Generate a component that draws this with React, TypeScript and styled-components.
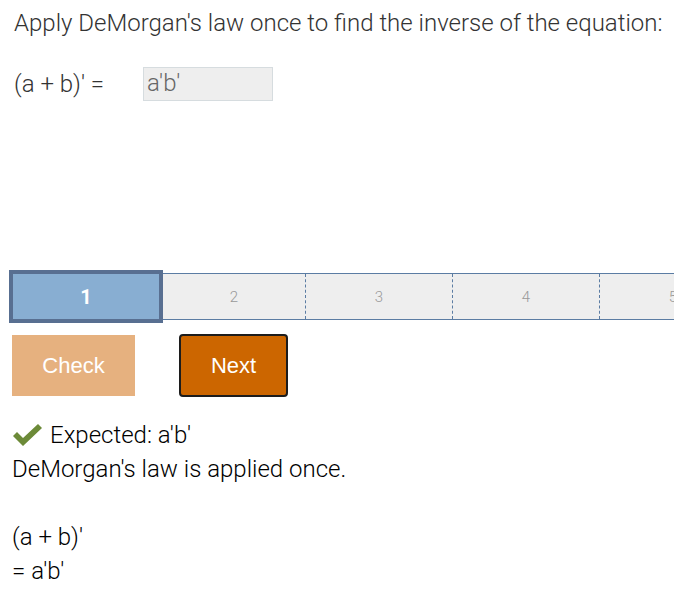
import React, { FC } from "react";
import styled, { createGlobalStyle } from "styled-components";

const GlobalStyle = createGlobalStyle`
  html, body {
    margin: 0;
    padding: 0;
    background: #fff;
    overflow: hidden;
  }
  body {
    font-family: Roboto, "Liberation Sans", sans-serif;
  }
`;

const Page = styled.div`
  width: 674px;
  height: 609px;
  overflow: hidden;
`;

const Prompt = styled.div`
  padding: 9px 0 0 14px;
  font-size: 24px;
  line-height: 28px;
  font-weight: 300;
  color: #333;
  white-space: nowrap;
`;

const EquationRow = styled.div`
  display: flex;
  align-items: center;
  margin: 30px 0 0 14px;
  font-size: 24px;
  font-weight: 300;
  color: #333;
`;

const EquationLabel = styled.span`
  width: 129px;
`;

const Answer = styled.div`
  box-sizing: border-box;
  width: 130px;
  height: 34px;
  padding: 0 0 0 3px;
  background: #eeeeee;
  border: 1px solid #d6dcdf;
  color: #666;
  font-size: 24px;
  font-weight: 300;
  line-height: 30px;
`;

const ProgressBar = styled.div`
  display: flex;
  height: 45px;
  margin: 172px 0 0 9px;
  width: 800px;
  background: #eeeeee;
  border-top: 1px solid #5b7ca3;
  border-bottom: 1px solid #5b7ca3;
`;

const Segment = styled.div<{ $active?: boolean; $w: number }>`
  box-sizing: border-box;
  flex: none;
  width: ${(p) => p.$w}px;
  display: flex;
  align-items: center;
  justify-content: center;
  font-size: ${(p) => (p.$active ? "20px" : "15px")};
  font-weight: ${(p) => (p.$active ? 700 : 300)};
  color: ${(p) => (p.$active ? "#fff" : "#999")};
  background: ${(p) => (p.$active ? "#88aed2" : "#eeeeee")};
  ${(p) =>
    p.$active
      ? `border: 4px solid #586f91; margin: -4px 0; position: relative;`
      : `border-right: 1px dashed #5b7ca3;`}
`;

const Buttons = styled.div`
  display: flex;
  align-items: center;
  gap: 44px;
  margin: 14px 0 0 12px;
  height: 63px;
`;

const Button = styled.button<{ $disabled?: boolean }>`
  font-family: "Liberation Sans", Arial, sans-serif;
  font-size: 22px;
  color: #fff;
  cursor: pointer;
  ${(p) =>
    p.$disabled
      ? `width: 123px; height: 61px; background: #e6b17f; border: none; border-radius: 0; padding: 0;`
      : `width: 109px; height: 63px; background: #cc6600; border: 2px solid #1c1c1c; border-radius: 4px; padding: 0;`}
`;

const Feedback = styled.div`
  margin: 21px 0 0 12px;
  font-size: 24px;
  line-height: 34px;
  font-weight: 300;
  color: #000;
`;

const ExpectedRow = styled.div`
  display: flex;
  align-items: center;
  gap: 7px;
`;

const Line = styled.div`
  min-height: 34px;
  white-space: nowrap;
`;

const CheckMark: FC = () => (
  <svg width="31" height="24" viewBox="0 0 31 24">
    <path d="M1 13 L5 9 L11 15 L26 1 L30 5 L11 23 Z" fill="#6c8a38" />
  </svg>
);

const App: FC = () => {
  const segments = [
    { n: 1, w: 154, active: true },
    { n: 2, w: 143 },
    { n: 3, w: 147 },
    { n: 4, w: 147 },
    { n: 5, w: 147 },
  ];
  return (
    <Page>
      <GlobalStyle />
      <Prompt>Apply DeMorgan's law once to find the inverse of the equation:</Prompt>
      <EquationRow>
        <EquationLabel>(a + b)' =</EquationLabel>
        <Answer>a'b'</Answer>
      </EquationRow>
      <ProgressBar>
        {segments.map((s) => (
          <Segment key={s.n} $active={s.active} $w={s.w}>
            {s.n}
          </Segment>
        ))}
      </ProgressBar>
      <Buttons>
        <Button $disabled>Check</Button>
        <Button>Next</Button>
      </Buttons>
      <Feedback>
        <ExpectedRow>
          <CheckMark />
          <span>Expected: a'b'</span>
        </ExpectedRow>
        <Line>DeMorgan's law is applied once.</Line>
        <Line />
        <Line>(a + b)'</Line>
        <Line>= a'b'</Line>
      </Feedback>
    </Page>
  );
};

export default App;
